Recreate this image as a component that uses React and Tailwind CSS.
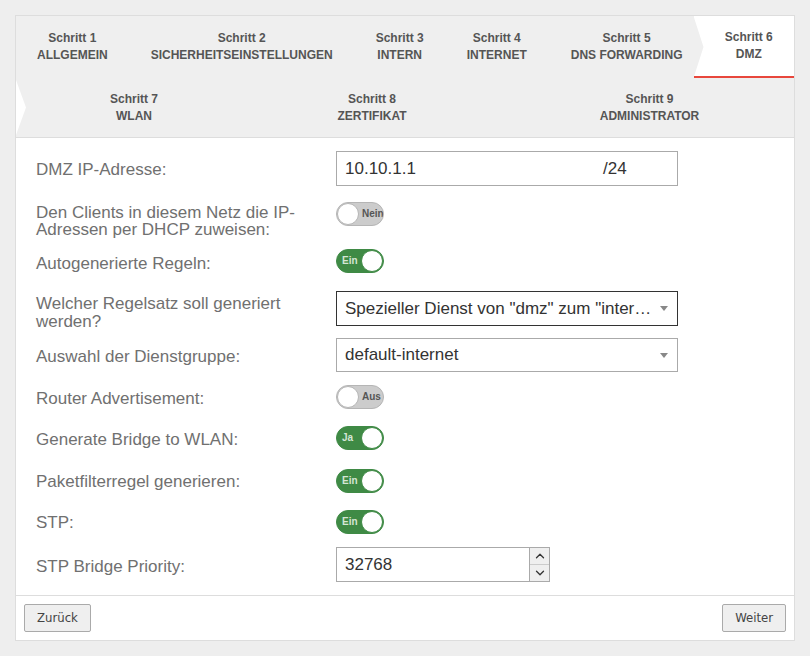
import { ChevronUp, ChevronDown } from 'lucide-react';

function Toggle({ on, label }) {
  if (on) {
    return (
      <div className="relative w-[48px] h-[24px] rounded-full bg-[#3f8a45] border border-[#3f8a45] overflow-hidden flex items-center">
        <span className="pl-[5px] text-[10px] font-bold text-[#d5e6d5] leading-none">{label}</span>
        <div className="absolute right-0 top-0 w-[22px] h-[22px] rounded-full bg-white border border-[#3f8a45]" />
      </div>
    );
  }
  return (
    <div className="relative w-[48px] h-[24px] rounded-full bg-[#cccccc] border border-[#b5b5b5] overflow-hidden flex items-center">
      <span className="pl-[25px] text-[10px] font-bold text-[#555] leading-none whitespace-nowrap">{label}</span>
      <div className="absolute left-0 top-0 w-[22px] h-[22px] rounded-full bg-white border border-[#b5b5b5]" />
    </div>
  );
}

function Caret() {
  return (
    <svg width="8" height="5" viewBox="0 0 8 5" className="flex-none">
      <path d="M0 0 L8 0 L4 5 Z" fill="#888" />
    </svg>
  );
}

function Tab({ step, name, className = '' }) {
  return (
    <div className={`flex flex-col items-center justify-center text-[12px] font-bold text-[#555] leading-[17px] whitespace-nowrap ${className}`}>
      <span>Schritt {step}</span>
      <span>{name}</span>
    </div>
  );
}

export default function App() {
  return (
    <div className="min-h-screen bg-[#eeeeee] p-[15px]" style={{ fontFamily: '"Liberation Sans", Arial, sans-serif' }}>
      <div className="bg-white border border-[#dddddd]">
        {/* step bar */}
        <div className="bg-[#efefef] border-b border-[#dddddd]">
          <div className="flex h-[62px]">
            <Tab step={1} name="ALLGEMEIN" className="px-[21px]" />
            <Tab step={2} name="SICHERHEITSEINSTELLUNGEN" className="px-[22px]" />
            <Tab step={3} name="INTERN" className="px-[21px]" />
            <Tab step={4} name="INTERNET" className="px-[22px]" />
            <Tab step={5} name="DNS FORWARDING" className="pl-[22px] pr-[11px]" />
            <div
              className="flex-1 bg-white border-b-2 border-[#e8473c] flex"
              style={{ clipPath: 'polygon(0 0, 100% 0, 100% 100%, 0 100%, 10px 50%)' }}
            >
              <Tab step={6} name="DMZ" className="flex-1 pl-[10px]" />
            </div>
          </div>
          <div className="flex h-[59px]">
            <div
              className="w-[10px] flex-none my-[2px] bg-white"
              style={{ clipPath: 'polygon(0 0, 100% 50%, 0 100%)' }}
            />
            <Tab step={7} name="WLAN" className="w-[216px] flex-none" />
            <Tab step={8} name="ZERTIFIKAT" className="w-[260px] flex-none" />
            <Tab step={9} name="ADMINISTRATOR" className="flex-1 pl-[3px]" />
          </div>
        </div>

        {/* form */}
        <div className="px-[20px] pt-[13px] pb-[13px] text-[17px] text-[#707070] leading-[18px]">
          <div className="flex">
            <div className="w-[300px] flex-none mt-[10px]">DMZ IP-Adresse:</div>
            <div className="w-[342px] h-[35px] border border-[#aaaaaa] flex items-center text-[#333] pl-[8px]">
              <span className="w-[258px]">10.10.1.1</span>
              <span>/24</span>
            </div>
          </div>

          <div className="flex mt-[16px]">
            <div className="w-[300px] flex-none mt-[2px] leading-[17px] pr-[10px]">
              Den Clients in diesem Netz die IP-Adressen per DHCP zuweisen:
            </div>
            <Toggle on={false} label="Nein" />
          </div>

          <div className="flex mt-[11px]">
            <div className="w-[300px] flex-none mt-[6px]">Autogenerierte Regeln:</div>
            <Toggle on label="Ein" />
          </div>

          <div className="flex mt-[18px]">
            <div className="w-[300px] flex-none mt-[4px] pr-[20px]">Welcher Regelsatz soll generiert werden?</div>
            <div className="w-[342px] h-[35px] border border-[#333333] flex items-center justify-between text-[#333] pl-[8px] pr-[9px]">
              <span className="whitespace-nowrap">Spezieller Dienst von "dmz" zum "inter…</span>
              <Caret />
            </div>
          </div>

          <div className="flex mt-[7px]">
            <div className="w-[300px] flex-none mt-[10px]">Auswahl der Dienstgruppe:</div>
            <div className="w-[342px] h-[34px] border border-[#aaaaaa] flex items-center justify-between text-[#333] pl-[8px] pr-[9px]">
              <span>default-internet</span>
              <Caret />
            </div>
          </div>

          <div className="flex mt-[13px]">
            <div className="w-[300px] flex-none mt-[5px]">Router Advertisement:</div>
            <Toggle on={false} label="Aus" />
          </div>

          <div className="flex mt-[17px]">
            <div className="w-[300px] flex-none mt-[5px]">Generate Bridge to WLAN:</div>
            <Toggle on label="Ja" />
          </div>

          <div className="flex mt-[19px]">
            <div className="w-[300px] flex-none mt-[4px]">Paketfilterregel generieren:</div>
            <Toggle on label="Ein" />
          </div>

          <div className="flex mt-[17px]">
            <div className="w-[300px] flex-none mt-[4px]">STP:</div>
            <Toggle on label="Ein" />
          </div>

          <div className="flex mt-[13px]">
            <div className="w-[300px] flex-none mt-[11px]">STP Bridge Priority:</div>
            <div className="flex h-[35px]">
              <div className="w-[194px] border border-[#aaaaaa] flex items-center text-[#333] pl-[8px]">32768</div>
              <div className="w-[20px] flex flex-col border border-l-0 border-[#aaaaaa]">
                <div className="flex-1 bg-[#efefef] flex items-center justify-center border-b border-[#cccccc]">
                  <ChevronUp size={14} strokeWidth={2.25} color="#333" />
                </div>
                <div className="flex-1 bg-[#efefef] flex items-center justify-center">
                  <ChevronDown size={14} strokeWidth={2.25} color="#333" />
                </div>
              </div>
            </div>
          </div>
        </div>

        {/* footer */}
        <div className="border-t border-[#dddddd] flex justify-between items-center px-[8px] py-[8px]">
          <button
            className="h-[28px] px-[12px] bg-[#efefef] border border-[#aaaaaa] rounded-[2px] text-[13px] text-[#444]"
            style={{ fontFamily: '"DejaVu Sans Condensed", "Liberation Sans", sans-serif' }}
          >
            Zurück
          </button>
          <button
            className="h-[28px] px-[12px] bg-[#efefef] border border-[#aaaaaa] rounded-[2px] text-[13px] text-[#444]"
            style={{ fontFamily: '"DejaVu Sans Condensed", "Liberation Sans", sans-serif' }}
          >
            Weiter
          </button>
        </div>
      </div>
    </div>
  );
}
